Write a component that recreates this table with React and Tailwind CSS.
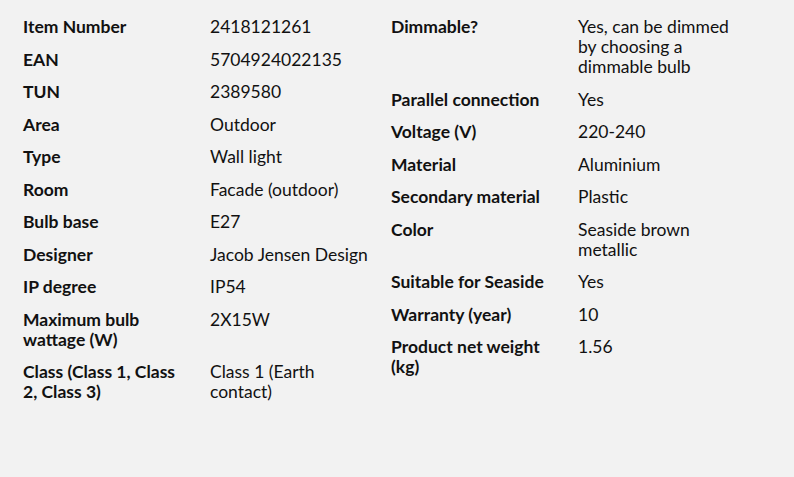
const LEFT = [
  ['Item Number', '2418121261'],
  ['EAN', '5704924022135'],
  ['TUN', '2389580'],
  ['Area', 'Outdoor'],
  ['Type', 'Wall light'],
  ['Room', 'Facade (outdoor)'],
  ['Bulb base', 'E27'],
  ['Designer', 'Jacob Jensen Design'],
  ['IP degree', 'IP54'],
  ['Maximum bulb wattage (W)', '2X15W'],
  ['Class (Class 1, Class 2, Class 3)', 'Class 1 (Earth contact)'],
]

const RIGHT = [
  ['Dimmable?', 'Yes, can be dimmed by choosing a dimmable bulb'],
  ['Parallel connection', 'Yes'],
  ['Voltage (V)', '220-240'],
  ['Material', 'Aluminium'],
  ['Secondary material', 'Plastic'],
  ['Color', 'Seaside brown metallic'],
  ['Suitable for Seaside', 'Yes'],
  ['Warranty (year)', '10'],
  ['Product net weight (kg)', '1.56'],
]

function SpecList({ rows }) {
  return (
    <dl className="flex flex-col gap-y-[12.5px] w-[368px]">
      {rows.map(([label, value]) => (
        <div key={label} className="flex">
          <dt className="w-[187px] shrink-0 pr-7 font-bold">{label}</dt>
          <dd className="w-[181px] shrink-0 pr-5">{value}</dd>
        </div>
      ))}
    </dl>
  )
}

export default function App() {
  return (
    <div
      className="w-[794px] h-[477px] bg-[#f2f2f2] text-[#111] text-[17.5px] leading-[20px] pl-[23px] pt-[17px] flex"
      style={{ fontFamily: 'Lato, "Open Sans", sans-serif' }}
    >
      <SpecList rows={LEFT} />
      <SpecList rows={RIGHT} />
    </div>
  )
}
